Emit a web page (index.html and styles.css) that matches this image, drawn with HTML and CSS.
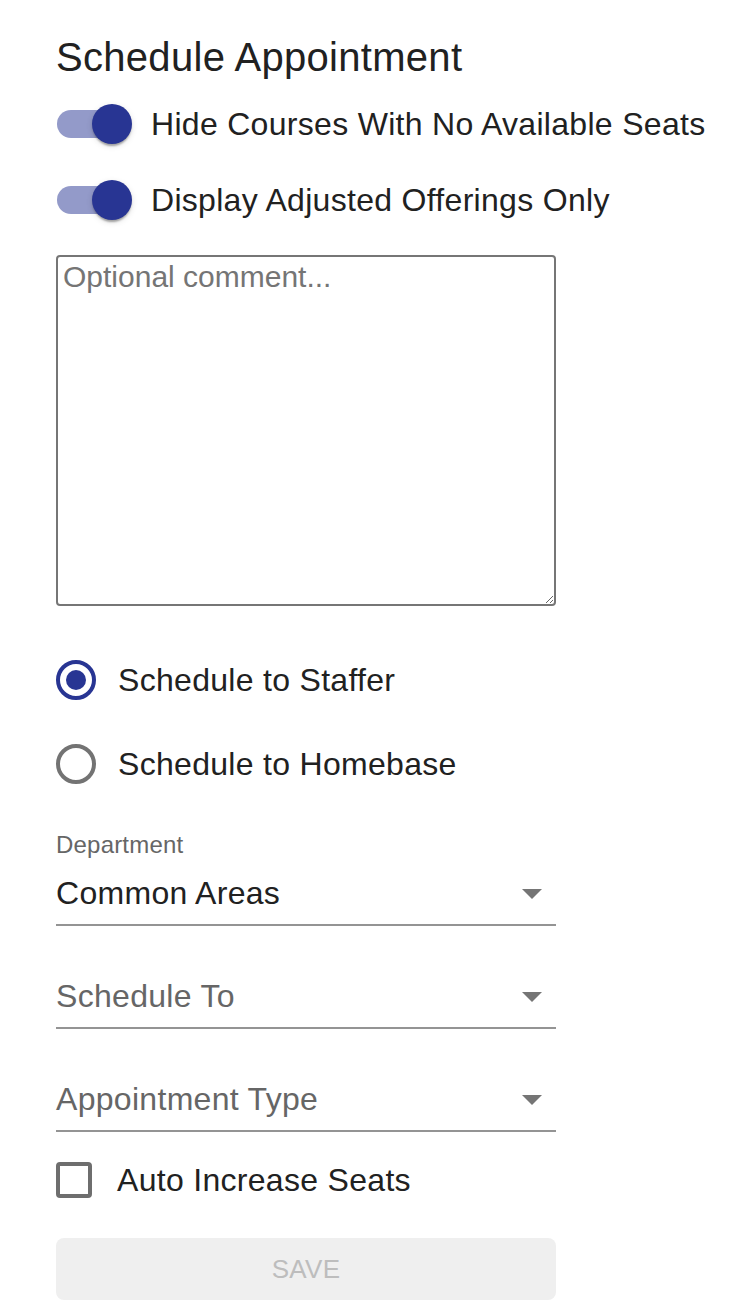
FILE: index.html
```html
<!DOCTYPE html>
<html lang="en">
<head>
    <meta charset="UTF-8">
    <meta name="viewport" content="width=device-width, initial-scale=1.0">
    <title>Schedule Appointment</title>
    <link rel="stylesheet" href="styles.css">
</head>
<body>
    <div class="form">
        <h2 class="title">Schedule Appointment</h2>

        <label class="switch-row">
            <span class="switch"><span class="track"></span><span class="thumb"></span></span>
            <span class="switch-label">Hide Courses With No Available Seats</span>
        </label>
        <label class="switch-row">
            <span class="switch"><span class="track"></span><span class="thumb"></span></span>
            <span class="switch-label">Display Adjusted Offerings Only</span>
        </label>

        <textarea class="comment" placeholder="Optional comment..."></textarea>

        <div class="radio-group">
            <label class="radio-row">
                <span class="radio checked"></span>
                <span class="radio-label">Schedule to Staffer</span>
            </label>
            <label class="radio-row">
                <span class="radio"></span>
                <span class="radio-label">Schedule to Homebase</span>
            </label>
        </div>

        <div class="field">
            <span class="field-label">Department</span>
            <div class="select">
                <span class="value">Common Areas</span>
                <svg class="arrow" viewBox="0 0 24 24"><path d="M7 10l5 5 5-5z"></path></svg>
            </div>
        </div>

        <div class="field">
            <span class="field-label"></span>
            <div class="select">
                <span class="value empty">Schedule To</span>
                <svg class="arrow" viewBox="0 0 24 24"><path d="M7 10l5 5 5-5z"></path></svg>
            </div>
        </div>

        <div class="field">
            <span class="field-label"></span>
            <div class="select">
                <span class="value empty">Appointment Type</span>
                <svg class="arrow" viewBox="0 0 24 24"><path d="M7 10l5 5 5-5z"></path></svg>
            </div>
        </div>

        <label class="check-row">
            <span class="checkbox"></span>
            <span class="check-label">Auto Increase Seats</span>
        </label>

        <button class="save" disabled>SAVE</button>
    </div>
</body>
</html>
```

FILE: styles.css
```css
body {
    margin: 0;
    background: #fff;
    color: #212121;
    font-family: "Liberation Sans", Arial, Helvetica, sans-serif;
}
.form {
    padding: 33px 0 0 56px;
    width: 500px;
}
.title {
    margin: 0 0 5px 0;
    font-size: 40px;
    line-height: 48px;
    font-weight: 400;
    letter-spacing: 0.3px;
}

/* switches */
.switch-row {
    display: flex;
    align-items: center;
    height: 76px;
    white-space: nowrap;
}
.switch {
    position: relative;
    width: 75px;
    height: 40px;
    margin-left: 1px;
    flex: none;
}
.track {
    position: absolute;
    left: 0;
    top: 6px;
    width: 68px;
    height: 28px;
    border-radius: 14px;
    background: #939ac9;
}
.thumb {
    position: absolute;
    left: 35px;
    top: 0;
    width: 40px;
    height: 40px;
    border-radius: 50%;
    background: #283593;
    box-shadow: 0 4px 2px -2px rgba(0, 0, 0, 0.2), 0 2px 2px rgba(0, 0, 0, 0.14), 0 2px 6px rgba(0, 0, 0, 0.12);
}
.switch-label {
    margin-left: 19px;
    font-size: 32px;
    letter-spacing: 0.3px;
}

/* comment */
.comment {
    display: block;
    box-sizing: border-box;
    width: 500px;
    height: 351px;
    margin: 17px 0 0 0;
    padding: 3px 5px;
    border: 2px solid #767676;
    border-radius: 4px;
    font-family: "Liberation Sans", Arial, sans-serif;
    font-size: 30px;
    color: #212121;
}
.comment::placeholder {
    color: #757575;
}

/* radios */
.radio-group {
    margin-top: 32px;
}
.radio-row {
    display: flex;
    align-items: center;
    height: 84px;
}
.radio {
    box-sizing: border-box;
    width: 40px;
    height: 40px;
    border: 4px solid #737373;
    border-radius: 50%;
    display: flex;
    align-items: center;
    justify-content: center;
    flex: none;
}
.radio.checked {
    border-color: #283593;
}
.radio.checked::after {
    content: "";
    width: 20px;
    height: 20px;
    border-radius: 50%;
    background: #283593;
}
.radio-label {
    margin-left: 22px;
    font-size: 32px;
    letter-spacing: 0.3px;
}

/* selects */
.field {
    margin-top: 7px;
}
.radio-group + .field {
    margin-top: 24px;
}
.field-label {
    display: block;
    height: 32px;
    line-height: 30px;
    font-size: 24px;
    color: #666;
    letter-spacing: 0.2px;
}
.select {
    box-sizing: border-box;
    height: 64px;
    padding: 8px 0;
    border-bottom: 2px solid #949494;
    display: flex;
    align-items: center;
}
.value {
    flex: 1;
    font-size: 32px;
    line-height: 46px;
    letter-spacing: 0.3px;
}
.value.empty {
    color: #666;
}
.arrow {
    width: 48px;
    height: 48px;
    fill: #757575;
    flex: none;
}

/* checkbox */
.check-row {
    display: flex;
    align-items: center;
    height: 84px;
    margin-top: 6px;
}
.checkbox {
    box-sizing: border-box;
    width: 36px;
    height: 36px;
    border: 4px solid #6e6e6e;
    border-radius: 4px;
    flex: none;
}
.check-label {
    margin-left: 25px;
    font-size: 32px;
    letter-spacing: 0.3px;
}

/* save */
.save {
    display: block;
    width: 500px;
    height: 62px;
    margin-top: 16px;
    border: none;
    border-radius: 8px;
    background: #efefef;
    color: #bdbdbd;
    font-family: "Liberation Sans", Arial, sans-serif;
    font-size: 26px;
    letter-spacing: 0.3px;
}
```
